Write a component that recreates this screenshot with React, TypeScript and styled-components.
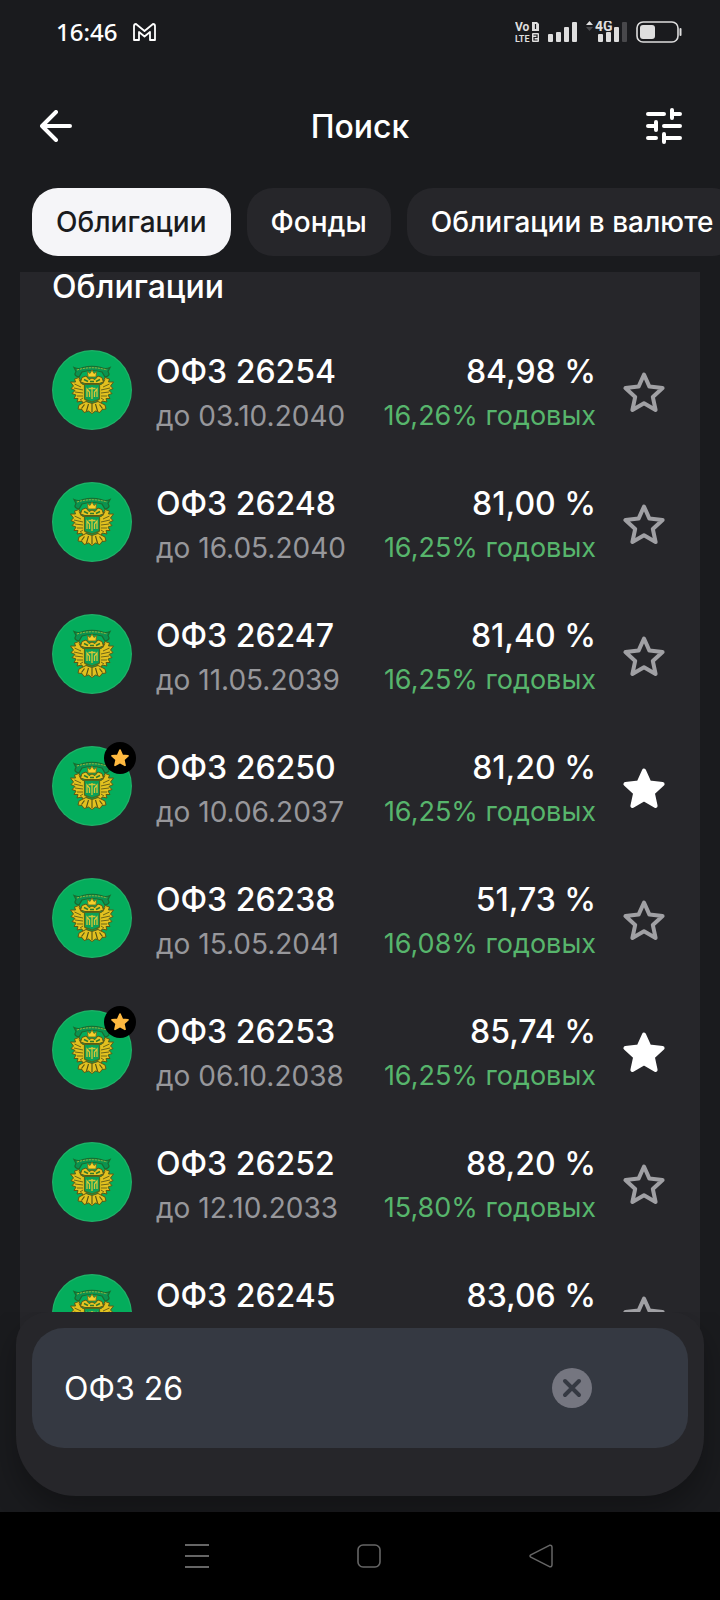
import { useState } from 'react';
import styled, { createGlobalStyle } from 'styled-components';

type Bond = {
  name: string;
  until?: string;
  price: string;
  yieldRate?: string;
  favorite: boolean;
};

const bonds: Bond[] = [
  { name: 'ОФЗ 26254', until: '03.10.2040', price: '84,98', yieldRate: '16,26', favorite: false },
  { name: 'ОФЗ 26248', until: '16.05.2040', price: '81,00', yieldRate: '16,25', favorite: false },
  { name: 'ОФЗ 26247', until: '11.05.2039', price: '81,40', yieldRate: '16,25', favorite: false },
  { name: 'ОФЗ 26250', until: '10.06.2037', price: '81,20', yieldRate: '16,25', favorite: true },
  { name: 'ОФЗ 26238', until: '15.05.2041', price: '51,73', yieldRate: '16,08', favorite: false },
  { name: 'ОФЗ 26253', until: '06.10.2038', price: '85,74', yieldRate: '16,25', favorite: true },
  { name: 'ОФЗ 26252', until: '12.10.2033', price: '88,20', yieldRate: '15,80', favorite: false },
  { name: 'ОФЗ 26245', price: '83,06', favorite: false },
];

const filters = ['Облигации', 'Фонды', 'Облигации в валюте'];

const GlobalStyle = createGlobalStyle`
  *, *::before, *::after {
    box-sizing: border-box;
  }
  body {
    margin: 0;
    background: #1a1b1e;
    color: #fff;
    font-family: Inter, Roboto, sans-serif;
  }
  button, input {
    font: inherit;
    color: inherit;
    border: 0;
    padding: 0;
    background: none;
  }
  svg {
    display: block;
  }
`;

const Screen = styled.div`
  display: flex;
  flex-direction: column;
  height: 100vh;
  overflow: hidden;
`;

const StatusBar = styled.div`
  display: flex;
  align-items: center;
  justify-content: space-between;
  height: 64px;
  flex: none;
  padding: 0 38px 0 56px;
`;

const StatusGroup = styled.div<{ $gap: number }>`
  display: flex;
  align-items: center;
  gap: ${({ $gap }) => $gap}px;
`;

const Clock = styled.span`
  font: 500 24px/32px 'Noto Sans', sans-serif;
`;

const Header = styled.header`
  display: grid;
  grid-template-columns: 48px 1fr 48px;
  align-items: center;
  height: 124px;
  flex: none;
  padding: 0 32px;
`;

const Title = styled.h1`
  margin: 0;
  padding-top: 2px;
  text-align: center;
  font-size: 32px;
  font-weight: 500;
  line-height: 40px;
`;

const IconButton = styled.button`
  display: flex;
  align-items: center;
  justify-content: center;
  width: 48px;
  height: 48px;
`;

const Filters = styled.nav`
  display: flex;
  flex: none;
  gap: 16px;
  padding: 0 32px 16px;
  overflow-x: auto;
  scrollbar-width: none;
`;

const Chip = styled.button<{ $active: boolean }>`
  flex: none;
  height: 68px;
  padding: 0 24px;
  border-radius: 26px;
  font-size: 28px;
  font-weight: 500;
  line-height: 36px;
  background: ${({ $active }) => ($active ? '#f5f5f8' : '#26262a')};
  color: ${({ $active }) => ($active ? '#1a1b1e' : '#fff')};
`;

const Panel = styled.main`
  display: flex;
  flex-direction: column;
  flex: 1;
  min-height: 0;
  margin: 0 20px;
  padding-bottom: 32px;
  background: #26262a;
`;

const Scroller = styled.div`
  flex: 1;
  min-height: 0;
  overflow-y: auto;
  scrollbar-width: none;
  padding: 0 32px;
`;

const SectionTitle = styled.h2`
  margin: 0 0 22px;
  font-size: 32px;
  font-weight: 500;
  line-height: 30px;
`;

const List = styled.ul`
  margin: 0;
  padding: 0;
  list-style: none;
`;

const Row = styled.li`
  display: flex;
  align-items: flex-start;
  height: 132px;
  padding-top: 26px;
`;

const Avatar = styled.div`
  position: relative;
  flex: none;
  width: 80px;
  height: 80px;
  margin-right: 24px;
`;

const Badge = styled.span`
  position: absolute;
  top: -4px;
  right: -4px;
  display: flex;
  align-items: center;
  justify-content: center;
  width: 32px;
  height: 32px;
  border-radius: 50%;
  background: #000;
`;

const Column = styled.div<{ $align?: 'right' }>`
  display: flex;
  flex-direction: column;
  flex: ${({ $align }) => ($align ? 'none' : 1)};
  text-align: ${({ $align }) => $align || 'left'};
  white-space: nowrap;
`;

const Primary = styled.span`
  font-size: 32px;
  font-weight: 500;
  line-height: 44px;
`;

const Until = styled.span`
  font-size: 28px;
  line-height: 44px;
  color: #97979b;
`;

const YieldRate = styled.span`
  font-size: 27px;
  line-height: 44px;
  color: #57b56c;
`;

const StarButton = styled.button`
  display: flex;
  align-items: center;
  justify-content: center;
  width: 48px;
  height: 84px;
  margin-left: 24px;
`;

const Sheet = styled.form`
  position: relative;
  flex: none;
  margin: -32px 16px 16px;
  padding: 16px 16px 48px;
  border-radius: 32px 32px 60px 60px;
  background: #26262a;
  box-shadow: 0 16px 32px rgba(0, 0, 0, 0.3);
  clip-path: inset(0 -16px -16px);
`;

const SearchField = styled.label`
  display: flex;
  align-items: center;
  height: 120px;
  padding: 0 92px 0 32px;
  border-radius: 32px;
  background: #353942;
`;

const SearchInput = styled.input`
  flex: 1;
  min-width: 0;
  padding-top: 2px;
  font-size: 32px;
  line-height: 40px;
  outline: 0;
`;

const NavBar = styled.footer`
  display: flex;
  align-items: center;
  justify-content: space-between;
  flex: none;
  height: 88px;
  padding: 0 155px 0 173px;
  background: #000;
`;

const starPath =
  'M21 2.5 L26.4 14.6 L39.6 16 L29.8 24.9 L32.6 38 L21 31.3 L9.4 38 L12.2 24.9 L2.4 16 L15.6 14.6 Z';

const Star = ({ filled }: { filled: boolean }) => (
  <svg width='44' height='42' viewBox='-1 -1 44 42'>
    <path
      d={starPath}
      fill={filled ? '#fff' : 'none'}
      stroke={filled ? '#fff' : '#a0a0a4'}
      strokeWidth='4'
      strokeLinejoin='round'
    />
  </svg>
);

const Emblem = () => (
  <svg width='80' height='80' viewBox='0 0 80 80'>
    <circle cx='40' cy='40' r='40' fill='#1fb268' />
    <circle cx='40' cy='40' r='38.8' fill='#04ad5c' />
    {/* ribbon */}
    <path
      d='M22 17.5 Q27 19.5 31 17.5 Q40 15 49 17.5 Q54 19.5 58 17.5 L56 21.5 Q59 26 53 27 L50 22 Q40 19 30 22 L27 27 Q21 26 24 21.5 Z'
      fill='#0b9350'
      stroke='#1b6a2e'
      strokeWidth='1.2'
    />
    <path d='M25 20 Q40 15.5 55 20' fill='none' stroke='#a9b93a' strokeWidth='1' strokeDasharray='2 1' />
    {/* wings */}
    <path
      d='M34 35 L30 34 L27 27.5 L22.5 29 L23.5 32 L18.5 32 L21.5 36 L19 38.5 L23 40.5 L20 43.5 L24 45 L22 48.5 L26 48.5 L25 52 L30 51 L31 55 L35 52 L34 46 Z
         M46 35 L50 34 L53 27.5 L57.5 29 L56.5 32 L61.5 32 L58.5 36 L61 38.5 L57 40.5 L60 43.5 L56 45 L58 48.5 L54 48.5 L55 52 L50 51 L49 55 L45 52 L46 46 Z'
      fill='#e2c11f'
      stroke='#5b5a16'
      strokeWidth='1'
      strokeLinejoin='round'
    />
    <path
      d='M22.5 34 L29 37 M22 38 L31 40 M23 42 L31 43 M25 46 L31 46 M27 29.5 L29.5 34 M28 50 L31 48 M57.5 34 L51 37 M58 38 L49 40 M57 42 L49 43 M55 46 L49 46 M53 29.5 L50.5 34 M52 50 L49 48'
      stroke='#6d6617'
      strokeWidth='1'
    />
    {/* heads and crown */}
    <path
      d='M33 33.5 L28.5 32 L30 27.5 L34 26 L37 29.5 L40 28 L43 29.5 L46 26 L50 27.5 L51.5 32 L47 33.5 Z'
      fill='#e6c522'
      stroke='#5b5a16'
      strokeWidth='1'
      strokeLinejoin='round'
    />
    <path d='M32 29.5 L36 31.5 M48 29.5 L44 31.5 M38 31.5 H42' stroke='#2f7a2a' strokeWidth='1.4' />
    <path d='M36 27 L35.5 21.5 L38 23.5 L40 20 L42 23.5 L44.5 21.5 L44 27 Z' fill='#f6d02a' stroke='#6d6617' strokeWidth='0.8' />
    {/* tail */}
    <path
      d='M27 55 L34 51.5 L40 53.5 L46 51.5 L53 55 L54 59 L50 59.5 L48 62.5 L43.5 61 L40 63.5 L36.5 61 L32 62.5 L30 59.5 L26 59 Z'
      fill='#e2c11f'
      stroke='#5b5a16'
      strokeWidth='1'
      strokeLinejoin='round'
    />
    <path d='M40 54 V62 M36.5 54 L34.5 61 M43.5 54 L45.5 61 M32.5 54.5 L29.5 58.5 M47.5 54.5 L50.5 58.5' stroke='#4f5216' strokeWidth='1.1' />
    {/* shield */}
    <path d='M32.5 34.5 H47.5 V48 Q47.5 50 45 50 L40 52 L35 50 Q32.5 50 32.5 48 Z' fill='#0aa158' stroke='#4f6a1c' strokeWidth='1.2' />
    <path
      d='M35 47 V39 L37.5 42 V47 M45 47 V39 L42.5 42 V47 M40 37 V49 M36.5 38.5 H43.5'
      fill='none'
      stroke='#d6c636'
      strokeWidth='1.3'
    />
  </svg>
);

const VolteIcon = () => (
  <svg width='24' height='22' viewBox='0 0 24 22' fill='#dedede'>
    <text x='0' y='10' fontFamily='Roboto, sans-serif' fontSize='12' fontWeight='700'>Vo</text>
    <text x='0' y='21' fontFamily='Roboto, sans-serif' fontSize='9' fontWeight='700'>LTE</text>
    <path d='M17 1 H22 L24 3 V10 H17 Z' />
    <rect x='17' y='12' width='7' height='9' rx='1' />
    <path d='M20.5 3 V8 M18.5 14 H22 V16.5 H19 V19 H22.5' fill='none' stroke='#1a1b1e' strokeWidth='1.2' />
  </svg>
);

const SignalIcon = () => (
  <svg width='29' height='22' viewBox='0 0 29 22' fill='#dedede'>
    <rect x='0' y='13' width='5' height='8' rx='1' />
    <rect x='8' y='11' width='5' height='10' rx='1' />
    <rect x='16' y='6' width='5' height='15' rx='1' />
    <rect x='24' y='1' width='5' height='20' rx='1' />
  </svg>
);

const MobileDataIcon = () => (
  <svg width='41' height='22' viewBox='0 0 41 22' fill='#dedede'>
    <path d='M0 4 L3.5 0 L7 4 Z' />
    <path d='M0 6 L3.5 10 L7 6 Z' fill='#48484b' />
    <rect x='12' y='13' width='5' height='8' rx='1' />
    <rect x='20' y='11' width='5' height='10' rx='1' />
    <rect x='28' y='6' width='5' height='15' rx='1' />
    <rect x='36' y='1' width='5' height='20' rx='1' fill='#48484b' />
    <text x='9' y='10' fontFamily='Roboto, sans-serif' fontSize='14' fontWeight='700' stroke='#1a1b1e' strokeWidth='2' paintOrder='stroke'>
      4G
    </text>
  </svg>
);

const BatteryIcon = () => (
  <svg width='46' height='22' viewBox='0 0 46 22'>
    <rect x='1' y='1' width='41' height='20' rx='6' fill='none' stroke='#dedede' strokeWidth='1.6' />
    <rect x='4' y='4' width='15' height='14' rx='3' fill='#dedede' />
    <rect x='43.5' y='7' width='2' height='8' rx='1' fill='#dedede' />
  </svg>
);

const App = () => {
  const [query, setQuery] = useState('ОФЗ 26');
  const [activeFilter, setActiveFilter] = useState(filters[0]);

  return (
    <>
      <GlobalStyle />
      <Screen>
        <StatusBar>
          <StatusGroup $gap={16}>
            <Clock>16:46</Clock>
            <svg width='23' height='18' viewBox='0 0 23 18' fill='none' stroke='#fff' strokeWidth='1.8' strokeLinejoin='round'>
              <path d='M1 17 V3 Q1 1 3 1 L11.5 8 L20 1 Q22 1 22 3 V17 H17 V9 L11.5 13.5 L6 9 V17 Z' />
            </svg>
          </StatusGroup>
          <StatusGroup $gap={9}>
            <VolteIcon />
            <SignalIcon />
            <MobileDataIcon />
            <BatteryIcon />
          </StatusGroup>
        </StatusBar>

        <Header>
          <IconButton aria-label='Назад'>
            <svg width='32' height='32' viewBox='0 0 32 32' fill='none' stroke='#fff' strokeWidth='4' strokeLinecap='round' strokeLinejoin='round'>
              <path d='M16 2 L2 16 L16 30 M2 16 H30' />
            </svg>
          </IconButton>
          <Title>Поиск</Title>
          <IconButton aria-label='Фильтры'>
            <svg width='36' height='36' viewBox='0 0 36 36' fill='none' stroke='#fff' strokeWidth='4' strokeLinecap='round'>
              <path d='M2 6 H18 M26 2 V10 M26 6 H34 M2 18 H10 M10 14 V22 M18 18 H34 M2 30 H10 M18 26 V34 M18 30 H34' />
            </svg>
          </IconButton>
        </Header>

        <Filters>
          {filters.map((filter) => (
            <Chip key={filter} $active={filter === activeFilter} onClick={() => setActiveFilter(filter)}>
              {filter}
            </Chip>
          ))}
        </Filters>

        <Panel>
          <Scroller>
            <SectionTitle>Облигации</SectionTitle>
            <List>
              {bonds.map((bond) => (
                <Row key={bond.name}>
                  <Avatar>
                    <Emblem />
                    {bond.favorite && (
                      <Badge>
                        <svg width='18' height='18' viewBox='0 0 42 42'>
                          <path d={starPath} fill='#ffb940' stroke='#ffb940' strokeWidth='4' strokeLinejoin='round' />
                        </svg>
                      </Badge>
                    )}
                  </Avatar>
                  <Column>
                    <Primary>{bond.name}</Primary>
                    {bond.until && <Until>до {bond.until}</Until>}
                  </Column>
                  <Column $align='right'>
                    <Primary>{bond.price} %</Primary>
                    {bond.yieldRate && <YieldRate>{bond.yieldRate}% годовых</YieldRate>}
                  </Column>
                  <StarButton aria-label='В избранное' aria-pressed={bond.favorite}>
                    <Star filled={bond.favorite} />
                  </StarButton>
                </Row>
              ))}
            </List>
          </Scroller>
        </Panel>

        <Sheet onSubmit={(e) => e.preventDefault()}>
          <SearchField>
            <SearchInput aria-label='Поиск' value={query} onChange={(e) => setQuery(e.target.value)} />
            <IconButton type='button' aria-label='Очистить' onClick={() => setQuery('')}>
              <svg width='40' height='40' viewBox='0 0 40 40'>
                <circle cx='20' cy='20' r='20' fill='#757680' />
                <path d='M13 13 L27 27 M27 13 L13 27' stroke='#353942' strokeWidth='4' strokeLinecap='round' />
              </svg>
            </IconButton>
          </SearchField>
        </Sheet>

        <NavBar>
          <IconButton aria-label='Меню'>
            <svg width='24' height='24' viewBox='0 0 24 24' stroke='#666' strokeWidth='2'>
              <path d='M0 1 H24 M0 12 H24 M0 23 H24' />
            </svg>
          </IconButton>
          <IconButton aria-label='Домой'>
            <svg width='24' height='24' viewBox='0 0 24 24' fill='none' stroke='#666' strokeWidth='1.6'>
              <rect x='1' y='1' width='22' height='22' rx='5' />
            </svg>
          </IconButton>
          <IconButton aria-label='Назад'>
            <svg width='24' height='24' viewBox='0 0 24 24' fill='none' stroke='#666' strokeWidth='1.5' strokeLinejoin='round'>
              <path d='M20.5 1.3 L1.8 10.8 Q0.2 12 1.8 13.2 L20.5 22.7 Q23 23.2 23 20.5 V3.5 Q23 0.8 20.5 1.3 Z' />
            </svg>
          </IconButton>
        </NavBar>
      </Screen>
    </>
  );
};

export default App;
